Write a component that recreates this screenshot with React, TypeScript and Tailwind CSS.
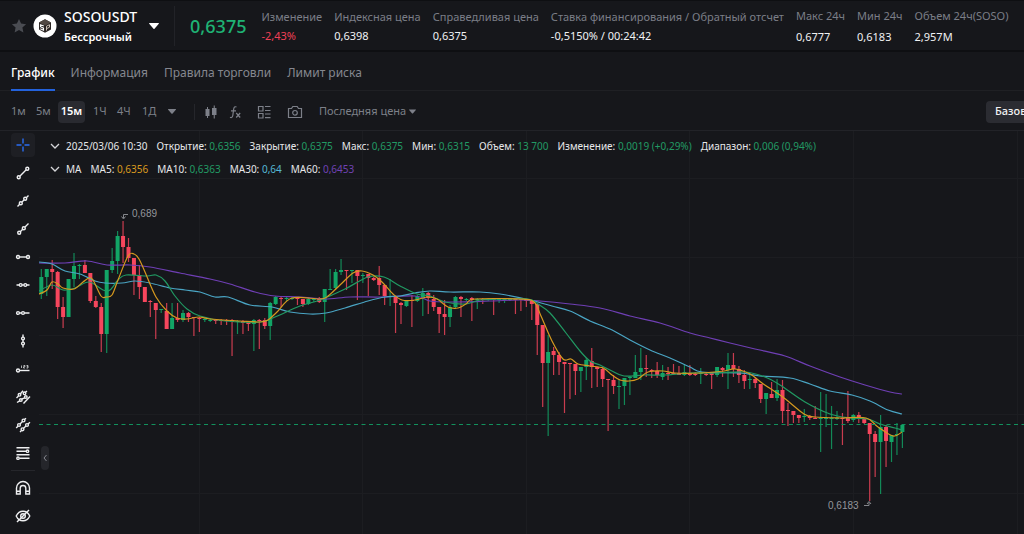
import React from "react";

type Candle = [bodyTop: number, bodyBottom: number, high: number, low: number, up: 0 | 1];
type Point = [number, number];

const CANDLES: Candle[] = [
  [277, 294, 269, 299, 1], [269, 277, 269, 296, 1], [269, 272, 260, 289, 0], [272, 307, 271, 319, 0],
  [307, 317, 297, 328, 0], [279, 317, 279, 317, 1], [266, 279, 253, 287, 1], [265, 266, 264, 279, 1],
  [265, 273, 260, 273, 0], [273, 301, 273, 303, 0], [301, 307, 296, 308, 0], [307, 334, 303, 352, 0],
  [270, 334, 270, 353, 1], [261, 270, 248, 273, 1], [236, 261, 231, 274, 1], [236, 247, 221, 263, 0],
  [247, 258, 238, 262, 0], [258, 275, 258, 295, 0], [275, 287, 265, 299, 0], [287, 302, 287, 302, 0],
  [301, 302, 300, 317, 0], [303, 310, 303, 339, 0], [309, 310, 309, 313, 1], [311, 329, 303, 329, 0],
  [318, 329, 303, 329, 1], [318, 320, 303, 322, 0], [313, 320, 310, 322, 1], [313, 317, 312, 322, 0],
  [317, 318, 317, 336, 0], [318, 319, 317, 332, 0], [319, 320, 318, 322, 1], [320, 321, 318, 322, 1],
  [320, 321, 319, 324, 0], [320, 321, 319, 325, 0], [320, 321, 319, 325, 0], [320, 322, 319, 356, 0],
  [321, 322, 320, 334, 1], [321, 323, 320, 334, 0], [322, 324, 321, 331, 0], [320, 324, 319, 351, 1],
  [320, 321, 319, 349, 0], [320, 326, 318, 329, 0], [303, 326, 302, 340, 1], [297, 304, 296, 305, 1],
  [298, 299, 297, 307, 0], [298, 299, 297, 301, 1], [298, 299, 297, 300, 1], [298, 299, 297, 305, 0],
  [299, 304, 299, 307, 0], [299, 304, 297, 305, 1], [299, 300, 298, 302, 1], [298, 302, 297, 303, 0],
  [289, 302, 289, 322, 1], [289, 290, 269, 290, 1], [272, 288, 269, 290, 1], [270, 272, 259, 275, 1],
  [270, 271, 270, 290, 0], [270, 271, 270, 283, 1], [270, 276, 270, 300, 0], [275, 276, 273, 283, 1],
  [274, 278, 274, 296, 0], [278, 280, 277, 281, 0], [278, 285, 266, 295, 0], [285, 296, 285, 305, 0],
  [296, 297, 279, 306, 1], [297, 303, 297, 333, 0], [303, 305, 302, 324, 0], [300, 306, 300, 307, 1],
  [300, 301, 295, 327, 0], [296, 301, 295, 302, 1], [293, 297, 288, 316, 1], [293, 298, 292, 314, 0],
  [299, 307, 295, 311, 0], [307, 314, 307, 333, 0], [314, 317, 300, 335, 0], [307, 317, 305, 327, 1],
  [297, 307, 296, 309, 1], [297, 299, 296, 317, 0], [299, 300, 298, 301, 1], [298, 300, 297, 321, 0],
  [299, 300, 298, 309, 1], [299, 300, 298, 304, 0], [299, 300, 298, 301, 1], [299, 300, 298, 315, 0],
  [299, 300, 298, 303, 1], [299, 300, 298, 303, 1], [299, 300, 298, 301, 1], [299, 300, 298, 314, 0],
  [299, 300, 299, 311, 0], [299, 301, 299, 307, 0], [301, 304, 300, 320, 0], [304, 325, 304, 355, 0],
  [325, 363, 325, 407, 0], [352, 363, 335, 436, 1], [351, 355, 347, 375, 0], [355, 362, 352, 375, 0],
  [362, 364, 362, 413, 0], [363, 364, 363, 399, 0], [364, 371, 364, 395, 0], [367, 371, 367, 392, 1],
  [360, 367, 358, 380, 1], [361, 367, 348, 388, 0], [367, 369, 367, 387, 0], [369, 379, 367, 387, 0],
  [379, 380, 379, 431, 0], [380, 386, 375, 394, 0], [386, 387, 379, 409, 1], [378, 386, 378, 405, 1],
  [377, 378, 376, 395, 1], [372, 378, 355, 378, 1], [368, 372, 348, 380, 1], [368, 369, 355, 377, 0],
  [370, 371, 369, 378, 0], [371, 375, 362, 378, 0], [373, 377, 365, 380, 1], [373, 374, 367, 380, 0],
  [373, 374, 364, 375, 0], [373, 375, 366, 375, 0], [372, 375, 364, 376, 1], [373, 375, 365, 376, 0],
  [374, 375, 372, 376, 0], [373, 374, 368, 384, 1], [374, 375, 372, 376, 0], [373, 375, 373, 389, 0],
  [367, 375, 367, 377, 1], [368, 370, 367, 377, 0], [365, 370, 353, 389, 1], [365, 369, 353, 377, 0],
  [369, 375, 366, 383, 0], [375, 381, 370, 389, 0], [379, 380, 373, 389, 1], [379, 383, 377, 388, 0],
  [384, 399, 384, 403, 0], [393, 399, 393, 414, 1], [394, 398, 382, 398, 0], [390, 398, 379, 401, 1],
  [390, 411, 380, 423, 0], [410, 411, 403, 426, 0], [411, 415, 411, 423, 0], [415, 418, 415, 423, 0],
  [416, 417, 409, 422, 1], [416, 418, 415, 420, 0], [418, 419, 406, 419, 0], [418, 419, 392, 452, 1],
  [418, 419, 394, 427, 1], [418, 419, 406, 449, 1], [418, 419, 411, 420, 1], [418, 419, 413, 445, 0],
  [418, 421, 391, 423, 0], [415, 420, 414, 422, 1], [415, 419, 412, 423, 0], [419, 423, 418, 424, 0],
  [423, 434, 423, 501, 0], [434, 442, 431, 477, 0], [427, 442, 415, 494, 1], [427, 441, 425, 467, 0],
  [435, 442, 435, 462, 1], [434, 435, 423, 455, 1], [425, 432, 425, 448, 1],
];

const MA5: Point[] = [
  [39, 294], [47, 290], [52, 282], [58, 284], [63, 288], [74, 289], [83, 282], [89, 278], [93, 280], [101, 296],
  [106, 297], [112, 295], [118, 280], [128, 256], [134, 254], [139, 259], [145, 272], [156, 297], [167, 311],
  [177, 318], [187, 319], [199, 317], [210, 319], [240, 321], [260, 322], [268, 320], [277, 312], [292, 298],
  [320, 299], [328, 296], [340, 285], [353, 273], [362, 271], [373, 275], [382, 282], [393, 294], [402, 300],
  [415, 300], [427, 297], [437, 299], [448, 307], [458, 308], [466, 304], [475, 299], [520, 299], [534, 302],
  [541, 316], [552, 341], [563, 359], [571, 359], [578, 364], [590, 366], [603, 368], [612, 375], [620, 380],
  [629, 381], [638, 379], [648, 372], [663, 371], [675, 373], [700, 373], [724, 371], [735, 369], [750, 374],
  [762, 383], [784, 398], [804, 414], [815, 417], [840, 418], [866, 418], [878, 427], [893, 436], [902, 432],
];
const MA10: Point[] = [
  [39, 291], [52, 285], [63, 290], [75, 288], [89, 282], [103, 290], [110, 290], [118, 280], [126, 275],
  [147, 276], [156, 275], [165, 281], [175, 296], [187, 309], [200, 316], [225, 321], [260, 322], [275, 317],
  [300, 306], [320, 300], [345, 289], [368, 277], [384, 277], [400, 286], [417, 294], [430, 296], [445, 302],
  [465, 304], [480, 300], [500, 299], [528, 299], [538, 304], [550, 313], [566, 333], [580, 351], [590, 361],
  [600, 365], [612, 371], [624, 376], [645, 375], [665, 375], [690, 373], [715, 373], [745, 372], [765, 377],
  [780, 385], [805, 402], [830, 414], [850, 418], [868, 419], [880, 424], [895, 428], [902, 430],
];
const MA30: Point[] = [
  [39, 262], [52, 264], [65, 271], [80, 274], [95, 281], [105, 283], [122, 283], [135, 281], [150, 283],
  [170, 288], [185, 290], [200, 292], [215, 297], [228, 297], [250, 305], [272, 307], [290, 312], [310, 314],
  [326, 313], [345, 308], [368, 301], [385, 297], [400, 296], [415, 293], [430, 291], [450, 292], [480, 292],
  [500, 294], [530, 300], [552, 306], [570, 311], [590, 321], [610, 329], [630, 340], [650, 350], [670, 358],
  [690, 367], [702, 372], [740, 373], [760, 376], [790, 378], [810, 384], [830, 391], [852, 395], [870, 401],
  [888, 410], [902, 414],
];
const MA60: Point[] = [
  [39, 263], [65, 263], [87, 261], [107, 265], [130, 265], [150, 267], [180, 273], [210, 279], [230, 284],
  [255, 292], [275, 296], [300, 297], [325, 299], [350, 297], [380, 297], [415, 296], [430, 301], [450, 302],
  [490, 301], [520, 300], [540, 301], [570, 304], [600, 308], [630, 316], [660, 323], [690, 333], [710, 338],
  [730, 343], [755, 349], [785, 356], [810, 366], [840, 377], [865, 385], [890, 392], [902, 394],
];

function smooth(points: Point[]): string {
  return points.reduce((path, [x, y], i) => {
    if (i === 0) return `M${x} ${y}`;
    const before = points[Math.max(i - 2, 0)];
    const from = points[i - 1];
    const after = points[Math.min(i + 1, points.length - 1)];
    return `${path} C${from[0] + (x - before[0]) / 6} ${from[1] + (y - before[1]) / 6} ${x - (after[0] - from[0]) / 6} ${y - (after[1] - from[1]) / 6} ${x} ${y}`;
  }, "");
}

function Chart() {
  return (
    <svg
      viewBox="39 131 985 403"
      preserveAspectRatio="xMinYMin slice"
      className="absolute inset-0 h-full w-full"
      role="img"
      aria-label="SOSOUSDT"
    >
      <g stroke="#1c1d21" shapeRendering="crispEdges">
        {[199, 362, 526, 689, 853, 1017].map((x) => (
          <line key={x} x1={x + 0.5} x2={x + 0.5} y1="131" y2="534" />
        ))}
        {[178, 257, 335, 414, 493].map((y) => (
          <line key={y} x1="39" x2="1024" y1={y + 0.5} y2={y + 0.5} />
        ))}
      </g>
      {CANDLES.map(([top, bottom, high, low, up], i) => {
        const x = 41.3 + i * 5.45;
        const color = up ? "#12a566" : "#f6465d";
        return (
          <g key={i} fill={color}>
            <rect x={x - 0.6} y={high} width="1.2" height={low - high} opacity="0.8" />
            <rect x={x - 2} y={top} width="4" height={bottom - top} />
          </g>
        );
      })}
      <g fill="none" strokeWidth="1.2">
        <path d={smooth(MA60)} stroke="#6f3fb5" />
        <path d={smooth(MA30)} stroke="#4aa5c4" />
        <path d={smooth(MA10)} stroke="#219a63" />
        <path d={smooth(MA5)} stroke="#d6991f" />
      </g>
      <line x1="39" x2="1024" y1="424.5" y2="424.5" stroke="#12915d" strokeWidth="1.2" strokeDasharray="4 3.5" />
      <g fill="none" stroke="#85878c">
        <path d="M128 214.5H123.5V218M121.5 216.5l2 2.5 2-2.5" />
        <path d="M864 505.500H869V502.500M867 504l2-2.500 2 2.500" />
      </g>
      <g fill="#94969b" fontSize="10" fontFamily="Liberation Sans, Arial, sans-serif">
        <text x="132" y="217">0,689</text>
        <text x="828" y="509">0,6183</text>
      </g>
    </svg>
  );
}

const TOOLS: { name: string; art: React.ReactNode }[] = [
  {
    name: "Перекрестие",
    art: <path d="M8 1.500v5M8 9.500v5M1.500 8h5M9.500 8h5" stroke="#2a6df4" />,
  },
  {
    name: "Отрезок",
    art: (
      <>
        <circle cx="3.700" cy="12.300" r="1.500" />
        <circle cx="12.300" cy="3.700" r="1.500" />
        <path d="M4.800 11.200l6.400-6.400" />
      </>
    ),
  },
  {
    name: "Прямая",
    art: (
      <>
        <circle cx="5.800" cy="10.200" r="1.500" />
        <circle cx="10.200" cy="5.800" r="1.500" />
        <path d="M2.500 13.500l2.200-2.200M7 9l2-2M11.300 4.700l2.200-2.200" />
      </>
    ),
  },
  {
    name: "Луч",
    art: (
      <>
        <circle cx="4.200" cy="11.800" r="1.500" />
        <circle cx="8.800" cy="7.200" r="1.500" />
        <path d="M5.300 10.700l2.400-2.400M10 6l3.500-3.500" />
      </>
    ),
  },
  {
    name: "Горизонтальный отрезок",
    art: (
      <>
        <circle cx="3" cy="8" r="1.500" />
        <circle cx="13" cy="8" r="1.500" />
        <path d="M4.500 8h7" />
      </>
    ),
  },
  {
    name: "Горизонтальная прямая",
    art: (
      <>
        <circle cx="5.700" cy="8" r="1.400" />
        <circle cx="10.300" cy="8" r="1.400" />
        <path d="M1.500 8h2.800M7.200 8h1.600M11.700 8h2.800" />
      </>
    ),
  },
  {
    name: "Горизонтальный луч",
    art: (
      <>
        <circle cx="3" cy="8" r="1.400" />
        <circle cx="8" cy="8" r="1.400" />
        <path d="M4.400 8h2.200M9.400 8h5.100" />
      </>
    ),
  },
  {
    name: "Вертикальная прямая",
    art: (
      <>
        <circle cx="8" cy="5.500" r="1.400" />
        <circle cx="8" cy="10.500" r="1.400" />
        <path d="M8 1.500v2.600M8 7v2M8 12v2.500" />
      </>
    ),
  },
  {
    name: "Линия цены",
    art: (
      <>
        <circle cx="3" cy="9.500" r="1.500" />
        <path d="M4.500 9.500h10" />
        <path d="M6.500 4.500v2.500M8.500 4.500h1.500v1.200H8.500V7H10M11.500 4.500H13V7h-1.500M11.800 5.700H13" strokeWidth=".7" />
      </>
    ),
  },
  {
    name: "Параллельные прямые",
    art: (
      <>
        <circle cx="4.500" cy="5.800" r="1.300" />
        <circle cx="9.500" cy="4.300" r="1.300" />
        <circle cx="5.800" cy="11" r="1.300" />
        <circle cx="10.800" cy="8" r="1.300" />
        <path d="M1.500 9l2-2M5.500 4.800L8 1.800M10.500 3.300L12 2M2 13.500l2.700-1.700M6.800 10l3-1.200M8.500 14.500l6.500-7" />
      </>
    ),
  },
  {
    name: "Ценовой канал",
    art: (
      <>
        <circle cx="8.500" cy="3.500" r="1.400" />
        <circle cx="4" cy="8" r="1.400" />
        <circle cx="12" cy="8" r="1.400" />
        <circle cx="7.500" cy="12.300" r="1.400" />
        <path d="M1.200 11l1.700-1.800M5 7l2.500-2.500M9.500 2.500L11 1.200M5 15l1.500-1.500M8.500 11.300L11 9M13 7l2-1.800" />
      </>
    ),
  },
  {
    name: "Уровни Фибоначчи",
    art: (
      <>
        <path d="M1.500 2.800h13M1.500 6.200h9.500M1.500 9.700h13M4.500 13.200h10" />
        <circle cx="12.500" cy="6.200" r="1.200" />
        <circle cx="3" cy="13.200" r="1.200" />
      </>
    ),
  },
];

const HELPERS: { name: string; art: React.ReactNode }[] = [
  {
    name: "Магнит",
    art: (
      <path d="M1.500 14V8a6.500 6.500 0 0 1 13 0v6h-3.700V8.300a2.800 2.800 0 0 0-5.600 0V14zM1.500 11.300h3.700M10.800 11.300h3.700" />
    ),
  },
  {
    name: "Скрыть рисунки",
    art: (
      <>
        <path d="M1.200 8C2.700 4.800 5.200 3.200 8 3.200S13.300 4.800 14.800 8C13.300 11.200 10.800 12.800 8 12.800S2.700 11.200 1.200 8z" />
        <circle cx="8" cy="8" r="2.300" />
        <path d="M2 14L14 2" />
      </>
    ),
  },
];

function ToolButton({ name, art, active = false }: { name: string; art: React.ReactNode; active?: boolean }) {
  return (
    <button aria-label={name} className="flex h-7 w-6 items-center justify-center">
      <span className={active ? "flex size-6 items-center justify-center rounded-sm bg-[#1e1f24]" : "flex"}>
        <svg viewBox="0 0 16 16" className="size-4" fill="none" stroke="#eeeff1" strokeWidth="1.400">
          {art}
        </svg>
      </span>
    </button>
  );
}

function Caret({ className }: { className: string }) {
  return (
    <svg viewBox="0 0 10 6" className={className} fill="currentColor" aria-hidden="true">
      <path d="M.5 0h9c.4 0 .6.500.3.800L5.500 5.700a.7.700 0 0 1-1 0L.200.800C-.1.500.1 0 .5 0z" />
    </svg>
  );
}

const STATS = [
  { label: "Изменение", value: "-2,43%", color: "text-[#ef4056]", leading: "leading-[19px]" },
  { label: "Индексная цена", value: "0,6398", color: "text-[#f0f1f3]", leading: "leading-[19px]" },
  { label: "Справедливая цена", value: "0,6375", color: "text-[#f0f1f3]", leading: "leading-[19px]" },
  {
    label: "Ставка финансирования / Обратный отсчет",
    value: "-0,5150% / 00:24:42",
    color: "text-[#f0f1f3]",
    leading: "leading-[19px]",
  },
  { label: "Макс 24ч", value: "0,6777", color: "text-[#f0f1f3]", leading: "leading-[21px]" },
  { label: "Мин 24ч", value: "0,6183", color: "text-[#f0f1f3]", leading: "leading-[21px]" },
  { label: "Объем 24ч(SOSO)", value: "2,957M", color: "text-[#f0f1f3]", leading: "leading-[21px]" },
];

const QUOTE = [
  ["Открытие:", "0,6356"],
  ["Закрытие:", "0,6375"],
  ["Макс:", "0,6375"],
  ["Мин:", "0,6315"],
  ["Объем:", "13 700"],
  ["Изменение:", "0,0019 (+0,29%)"],
  ["Диапазон:", "0,006 (0,94%)"],
];

const AVERAGES = [
  { label: "MA5:", value: "0,6356", color: "text-[#d99a1f]" },
  { label: "MA10:", value: "0,6363", color: "text-[#229a64]" },
  { label: "MA30:", value: "0,64", color: "text-[#55b7d3]" },
  { label: "MA60:", value: "0,6453", color: "text-[#7042b4]" },
];

function Chevron() {
  return (
    <svg viewBox="0 0 10 6" className="h-[6px] w-[10px]" fill="none" stroke="#d5d6d9" strokeWidth="1.300">
      <path d="M1 1l4 4 4-4" />
    </svg>
  );
}

function Header() {
  return (
    <header className="flex h-[52px] items-center overflow-hidden border-t border-b-2 border-[#0e0f12] whitespace-nowrap">
      <button aria-label="В избранное" className="ml-[11px] shrink-0">
        <svg viewBox="0 0 16 16" className="size-4" fill="#4a4c52">
          <path d="M8 1l2.100 4.600 5 .6-3.700 3.400 1 4.900L8 12.100l-4.400 2.400 1-4.900L.9 6.200l5-.6z" />
        </svg>
      </button>
      <svg viewBox="0 0 24 24" className="ml-[6px] size-6 shrink-0" aria-hidden="true">
        <circle cx="12" cy="12" r="11.500" fill="#fff" />
        <path d="M12 5.300l6 3.200v7L12 18.800l-6-3.300v-7z" fill="#2a2422" />
        <path d="M12 5.300l6 3.200-6 3-6-3z" fill="#514842" />
        <path d="M10.800 12L7.500 10.700v2l3 1.500v2L7.300 14.800" fill="none" stroke="#fff" strokeWidth="1.100" />
        <path d="M13.500 16.500v-4.300l3-1.500v2.500l-3 1.500" fill="none" stroke="#c9bdb2" strokeWidth="1" />
      </svg>
      <button className="ml-[7px] flex shrink-0 items-center text-left text-white">
        <span className="flex flex-col pt-[2px]">
          <span className="text-[14px] leading-5 font-medium">SOSOUSDT</span>
          <span className="text-[11px] leading-5 font-semibold">Бессрочный</span>
        </span>
        <Caret className="ml-3 h-[6px] w-[10px]" />
      </button>
      <div className="mx-[15px] h-10 w-px shrink-0 bg-[#222328]" />
      <div className="shrink-0 text-[18px] leading-6 font-medium text-[#1fb274]">0,6375</div>
      <dl className="ml-[15px] flex shrink-0 items-center gap-3 text-[11px]">
        {STATS.map((stat) => (
          <div key={stat.label} className={stat.leading}>
            <dt className="text-[#7b7e87]">{stat.label}</dt>
            <dd className={stat.color}>{stat.value}</dd>
          </div>
        ))}
      </dl>
    </header>
  );
}

function Tabs() {
  return (
    <nav className="flex h-[39px] items-stretch gap-4 border-b border-[#1f2024] pl-[11px] text-[12px] whitespace-nowrap text-[#85878f]">
      <a href="#chart" className="-mb-px flex items-center border-b-2 border-[#2362dc] pt-[5px] font-medium text-white">
        График
      </a>
      <a href="#info" className="flex items-center pt-1">Информация</a>
      <a href="#rules" className="flex items-center pt-1">Правила торговли</a>
      <a href="#risk" className="flex items-center pt-1">Лимит риска</a>
    </nav>
  );
}

function Toolbar() {
  return (
    <div className="flex h-10 items-center overflow-hidden border-b border-[#222328] pt-[2px] pl-[11px] text-[11px] whitespace-nowrap text-[#7d8089]">
      <div className="flex shrink-0 items-center">
        <button className="w-[25px] text-left">1м</button>
        <button className="w-[22px] text-left">5м</button>
        <button className="h-[22px] w-[27px] rounded-sm bg-[#292a30] font-semibold text-white">15м</button>
        <button className="ml-2 w-6 text-left">1Ч</button>
        <button className="w-[25px] text-left">4Ч</button>
        <button className="w-[26px] text-left">1Д</button>
        <button aria-label="Другие интервалы">
          <Caret className="h-[5px] w-[8px]" />
        </button>
      </div>
      <div className="mr-[9px] ml-[18px] h-4 w-px shrink-0 bg-[#25262b]" />
      <button aria-label="Тип графика" className="shrink-0">
        <svg viewBox="0 0 14 16" className="h-4 w-[14px]" fill="currentColor">
          <path d="M1.500 5h4v7h-4zM3 3h1v11H3zM8 4h4.500v7H8zM9.700 1.500h1.100v13H9.700z" />
        </svg>
      </button>
      <button aria-label="Индикаторы" className="ml-[10px] shrink-0">
        <svg viewBox="0 0 14 16" className="h-4 w-[14px]" fill="none" stroke="currentColor" strokeWidth="1.200">
          <path d="M8.500 3C6.800 2.300 6 3 5.700 5L4.800 11.500C4.500 13.300 3.500 14 2 13.300M3 6.800h5M8.200 9l4 4.500M12.200 9l-4 4.500" />
        </svg>
      </button>
      <button aria-label="Макет" className="ml-[15px] shrink-0">
        <svg viewBox="0 0 14 14" className="size-[14px]" fill="none" stroke="currentColor" strokeWidth="1.200">
          <path d="M1.500 1.500H6V6H1.500zM1.500 8.500H6V13H1.500zM8 1.500h5.500M8 5.500h5.500M8 9h5.500M8 12.700h5.500" />
        </svg>
      </button>
      <button aria-label="Снимок графика" className="ml-4 shrink-0">
        <svg viewBox="0 0 16 14" className="h-[14px] w-4" fill="none" stroke="currentColor" strokeWidth="1.200">
          <path d="M1.500 3.500h3L5.800 1.500h4.400l1.300 2h3v9h-13z" />
          <circle cx="8" cy="7.800" r="2.300" />
        </svg>
      </button>
      <button className="ml-4 flex shrink-0 items-center">
        Последняя цена
        <Caret className="ml-[3px] h-[5px] w-[7px]" />
      </button>
      <button className="-mr-[38px] ml-auto h-[22px] w-[76px] shrink-0 rounded-sm bg-[#2b2c32] pl-[9px] text-left font-medium text-[#f0f1f3]">
        Базовый
      </button>
    </div>
  );
}

export default function App() {
  return (
    <div className="flex min-h-screen flex-col bg-[#16171b] font-['Noto_Sans',sans-serif]">
      <Header />
      <Tabs />
      <Toolbar />
      <main className="flex flex-1 items-stretch">
        <aside className="flex w-[39px] shrink-0 flex-col items-center pl-[7px]">
          {TOOLS.map((tool, i) => (
            <ToolButton key={tool.name} name={tool.name} art={tool.art} active={i === 0} />
          ))}
          <div className="my-[3px] h-px w-6 bg-[#25262b]" />
          {HELPERS.map((tool) => (
            <ToolButton key={tool.name} name={tool.name} art={tool.art} />
          ))}
        </aside>
        <section className="relative min-w-0 flex-1 overflow-hidden">
          <Chart />
          <div className="relative flex flex-col gap-[3px] pt-[5px] pl-[11px] text-[10px] leading-5 whitespace-nowrap text-[#e6e7ea]">
            <div className="flex items-center gap-[9px]">
              <button aria-label="Свернуть котировку" className="-mr-[3px]">
                <Chevron />
              </button>
              <span>2025/03/06 10:30</span>
              {QUOTE.map(([label, value]) => (
                <span key={label}>
                  {label} <span className="text-[#229a64]">{value}</span>
                </span>
              ))}
            </div>
            <div className="flex items-center gap-[9px]">
              <button aria-label="Свернуть индикатор" className="-mr-[3px]">
                <Chevron />
              </button>
              <span>MA</span>
              {AVERAGES.map((item) => (
                <span key={item.label}>
                  {item.label} <span className={item.color}>{item.value}</span>
                </span>
              ))}
            </div>
          </div>
          <button
            aria-label="Скрыть панель инструментов"
            className="absolute top-[315px] left-[2px] flex h-6 w-2 items-center justify-center rounded-sm bg-[#25262b]"
          >
            <svg viewBox="0 0 4 8" className="h-2 w-1" fill="none" stroke="#85878f" strokeWidth="1">
              <path d="M3.500 1L1 4l2.500 3" />
            </svg>
          </button>
        </section>
      </main>
    </div>
  );
}
